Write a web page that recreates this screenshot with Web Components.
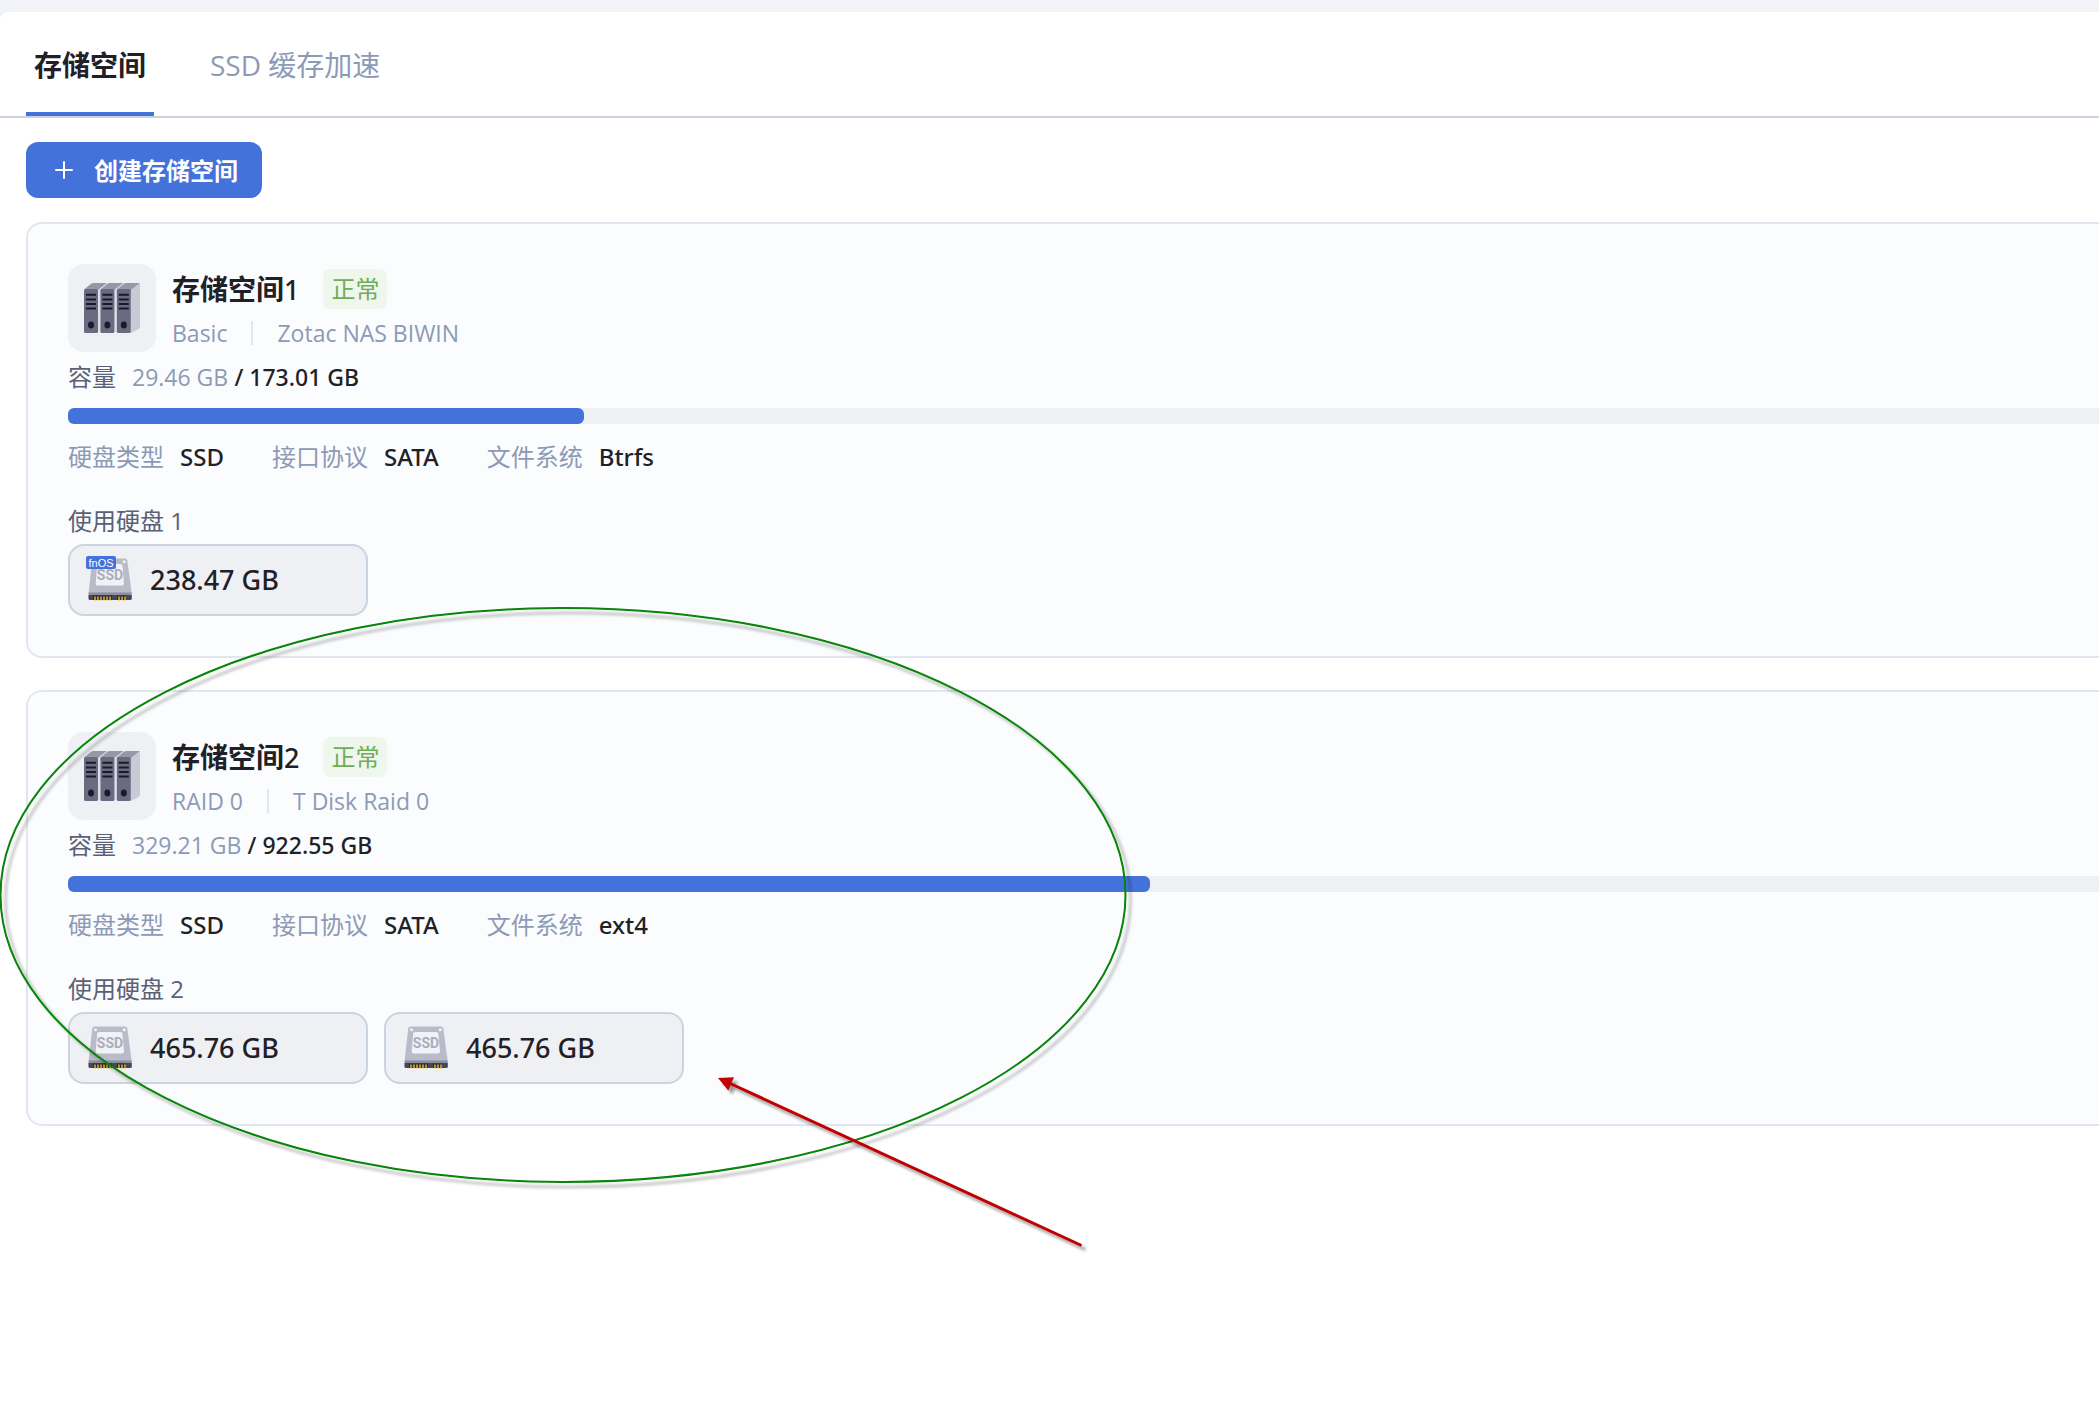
<!DOCTYPE html>
<html lang="zh-CN">
<head>
<meta charset="utf-8">
<title>存储空间</title>
<style>
  html, body { margin: 0; }
  body {
    --blue: #4472db;
    --ink: #1f2127;
    --muted: #8d9ab5;
    --sub: #5a6075;
    --fill: #eff0f4;
    --line: #cad3e0;
    background: #f1f3f9;
    color: var(--ink);
    font-family: "Open Sans", "Noto Sans CJK SC", sans-serif;
    font-size: 24px;
    line-height: 36px;
    min-height: 100vh;
    position: relative;
  }
</style>
</head>
<body>
<storage-page>
  <tab-bar slot="tabs">
    <tab-item active>存储空间</tab-item>
    <tab-item>SSD 缓存加速</tab-item>
  </tab-bar>
  <create-button>创建存储空间</create-button>
  <storage-card name="存储空间" number="1" mode="Basic" note="Zotac NAS BIWIN" used="29.46" total="173.01" type="SSD" bus="SATA" fs="Btrfs" count="1">
    <disk-chip system>238.47 GB</disk-chip>
  </storage-card>
  <storage-card name="存储空间" number="2" mode="RAID 0" note="T Disk Raid 0" used="329.21" total="922.55" type="SSD" bus="SATA" fs="ext4" count="2">
    <disk-chip>465.76 GB</disk-chip>
    <disk-chip>465.76 GB</disk-chip>
  </storage-card>
</storage-page>
<markup-layer></markup-layer>

<script>
const define = (name, render) => customElements.define(name, class extends HTMLElement {
  connectedCallback() {
    if (this.shadowRoot) return;
    this.attachShadow({ mode: 'open' }).innerHTML = render(this);
  }
});

define('storage-page', () => `
<style>
  :host { display: block; padding-top: 12px; box-sizing: border-box; }
  .panel { min-height: calc(100vh - 12px); box-sizing: border-box; background: #fff; border-top-left-radius: 8px; }
  main { display: flex; flex-direction: column; align-items: stretch; padding: 24px 0 24px 26px; }
  ::slotted(create-button) { align-self: flex-start; margin-bottom: 24px; }
  ::slotted(storage-card) { margin-bottom: 32px; }
</style>
<div class="panel">
  <slot name="tabs"></slot>
  <main><slot></slot></main>
</div>`);

define('tab-bar', () => `
<style>
  :host { display: block; border-bottom: 2px solid var(--line); }
  nav { display: flex; gap: 48px; padding: 0 26px; height: 104px; }
</style>
<nav role="tablist"><slot></slot></nav>`);

define('tab-item', el => `
<style>
  :host { display: flex; }
  button {
    font: inherit; font-size: 28px; line-height: 40px; color: var(--muted);
    background: none; border: 0; border-bottom: 4px solid transparent;
    padding: 6px 8px 0; cursor: pointer; white-space: nowrap;
  }
  :host([active]) button { color: var(--ink); font-weight: 700; border-bottom-color: var(--blue); }
</style>
<button role="tab" aria-selected="${el.hasAttribute('active')}"><slot></slot></button>`);

define('create-button', () => `
<style>
  :host { display: block; }
  button {
    display: flex; align-items: center; gap: 20px; height: 56px; padding: 0 24px 0 28px;
    background: var(--blue); color: #fff; border: 0; border-radius: 12px;
    font: inherit; font-weight: 700; cursor: pointer;
  }
  svg { display: block; }
  span { padding-top: 2px; }
</style>
<button>
  <svg width="20" height="20" viewBox="0 0 20 20" fill="none" stroke="#fff" stroke-width="2" stroke-linecap="round" aria-hidden="true"><path d="M10 2v16M2 10h16"/></svg>
  <span><slot></slot></span>
</button>`);

define('server-icon', () => {
  const unit = x => `
    <path fill="#9797a8" d="M${x} 25.5L${x + 7} 19.8Q${x + 8} 19 ${x + 9.5} 19H${x + 23}L${x + 14} 26z"/>
    <rect x="${x}" y="25" width="14" height="44" rx="1.5" fill="#6a6a83"/>
    <path stroke="#1a1b29" stroke-width="2" d="M${x + 2} 30.8h10M${x + 2} 35.4h10M${x + 2} 40h10M${x + 2} 44.6h10"/>
    <ellipse cx="${x + 7}" cy="61" rx="3" ry="3.4" fill="#1a1b29"/>`;
  return `
<style>
  :host { display: block; width: 88px; height: 88px; border-radius: 16px; background: var(--fill); }
  svg { display: block; }
</style>
<svg width="88" height="88" viewBox="0 0 88 88" aria-hidden="true">
  <path fill="#cacad4" d="M62 26L72 19V62.500Q72 64 71 64.800L63 69z"/>
  <path fill="#dedee6" d="M30 26.500L39 20v5L32 29V68h-2zM46 26.500L55 20v5L48.500 29V68H46z"/>
  ${unit(16)}${unit(32.4)}${unit(48.8)}
</svg>`;
});

const TRACK_SCALE = 1.493;

define('storage-card', el => {
  const a = n => el.getAttribute(n);
  const share = a('used') / a('total') * 100;
  return `
<style>
  :host {
    display: block; box-sizing: border-box; padding: 40px 0 40px 40px;
    border: 2px solid #e1e7f1; border-right: 0; border-radius: 16px 0 0 16px; background: #fbfcfe;
  }
  .head { display: flex; gap: 16px; }
  .title, .sub, .cap, .info, .disks { display: flex; align-items: center; white-space: nowrap; }
  .title { height: 50px; gap: 24px; }
  h2 { margin: 0; font-size: 28px; line-height: 40px; font-weight: 700; }
  h2 span { font-family: "Noto Sans", sans-serif; font-size: 27px; font-weight: 500; }
  .badge { padding: 2px 8px; border-radius: 8px; background: #eff6ec; color: #6fac58; }
  .sub { height: 38px; gap: 24px; font-size: 23px; color: var(--muted); }
  .sub i { width: 2px; height: 24px; background: #e1e7f1; }
  .cap { margin-top: 7px; gap: 16px; color: var(--sub); }
  .cap span { font-size: 23px; color: var(--muted); }
  b { font-family: "Noto Sans", sans-serif; font-weight: 500; color: var(--ink); }
  .cap b { font-size: 23px; }
  .bar { margin: 13px 0 15px; height: 16px; border-radius: 8px 0 0 8px; background: var(--fill); }
  .bar div { width: ${(share * TRACK_SCALE).toFixed(2)}%; height: 100%; border-radius: 6px; background: var(--blue); }
  .info { gap: 48px; margin: 0; color: var(--muted); }
  .info div { display: flex; gap: 16px; }
  dt, dd { margin: 0; }
  .used { margin-top: 28px; color: var(--sub); }
  .disks { margin-top: 5px; gap: 16px; }
</style>
<div class="head">
  <server-icon></server-icon>
  <div>
    <div class="title"><h2>${a('name')}<span>${a('number')}</span></h2><div class="badge">正常</div></div>
    <div class="sub"><span>${a('mode')}</span><i></i><span>${a('note')}</span></div>
  </div>
</div>
<div class="cap">容量 <div><span>${a('used')} GB</span> <b>/ ${a('total')} GB</b></div></div>
<div class="bar" role="progressbar" aria-label="容量" aria-valuenow="${share.toFixed(2)}"><div></div></div>
<dl class="info">
  <div><dt>硬盘类型</dt><dd><b>${a('type')}</b></dd></div>
  <div><dt>接口协议</dt><dd><b>${a('bus')}</b></dd></div>
  <div><dt>文件系统</dt><dd><b>${a('fs')}</b></dd></div>
</dl>
<div class="used">使用硬盘 ${a('count')}</div>
<div class="disks"><slot></slot></div>`;
});

define('disk-chip', el => `
<style>
  :host {
    display: flex; align-items: center; gap: 16px; box-sizing: border-box; width: 300px; height: 72px;
    padding: 0 16px; border: 2px solid var(--line); border-radius: 16px; background: var(--fill);
  }
  svg { display: block; flex: none; }
  span { font-family: "Noto Sans", sans-serif; font-size: 27px; font-weight: 500; white-space: nowrap; }
</style>
<svg width="48" height="48" viewBox="0 0 48 48" aria-hidden="true">
  <path fill="#b9bbc9" d="M8.500 2.500H39Q41 2.500 41.300 4.500L45.700 37H2.600L6.200 4.500Q6.500 2.500 8.500 2.500z"/>
  <path fill="#f0f2f8" d="M13 8H34.500Q36.200 8 36.400 9.500L38 27.500Q38 29.500 36 29.500H11.500Q9.600 29.500 9.700 27.500L11.200 9.500Q11.400 8 13 8z"/>
  <circle cx="9.500" cy="5.700" r="1.500" fill="#f0f2f8"/><circle cx="38.200" cy="5.700" r="1.500" fill="#f0f2f8"/>
  <path fill="#8b8da0" d="M2.600 36.500H45.700V42.500Q45.700 44 44 44H4.300Q2.600 44 2.600 42.500z"/>
  <path fill="#45475a" d="M2.600 39H45.700V42.500Q45.700 44 44 44H4.300Q2.600 44 2.600 42.500z"/>
  <path fill="#2b2c3a" d="M7 39.500H26V44H7zM31 39.500H40V44H31z"/>
  <path stroke="#e6b422" stroke-width="1.500" d="M9 40.500v4M12 40.500v4M15 40.500v4M18 40.500v4M21 40.500v4M24 40.500v4M33 40.500v4M36 40.500v4M39 40.500v4"/>
  <text x="24" y="23.500" text-anchor="middle" font-family="Roboto, sans-serif" font-size="14" font-weight="700" fill="#abadbb">SSD</text>
  ${el.hasAttribute('system') ? `<rect width="30" height="13" rx="2" fill="var(--blue)"/>
  <text x="15" y="10.500" text-anchor="middle" font-family="Liberation Sans, sans-serif" font-size="11" fill="#fff">fnOS</text>` : ''}
</svg>
<span><slot></slot></span>`);

/* Free-hand annotations laid over the page: a ring round the second pool and an arrow to its disks. */
define('markup-layer', () => `
<style>
  :host { position: absolute; top: 0; left: 0; pointer-events: none; }
  svg { display: block; }
</style>
<svg width="1140" height="1270" viewBox="0 0 1140 1270" aria-hidden="true">
  <defs>
    <filter id="s" x="-5%" y="-5%" width="110%" height="110%"><feDropShadow dx="5" dy="5" stdDeviation="1.600" flood-color="#000" flood-opacity=".3"/></filter>
    <filter id="t" x="-5%" y="-5%" width="110%" height="115%"><feDropShadow dx="4" dy="4" stdDeviation="1.600" flood-color="#000" flood-opacity=".4"/></filter>
  </defs>
  <ellipse cx="563" cy="895" rx="562.500" ry="287" fill="none" stroke="#078407" stroke-width="2" filter="url(#s)"/>
  <g filter="url(#t)">
    <path d="M728 1082.500L1081.500 1245.500" stroke="#c00000" stroke-width="3"/>
    <path d="M718 1078L734 1077.300L728.300 1090.500z" fill="#c00000"/>
  </g>
</svg>`);
</script>
</body>
</html>
